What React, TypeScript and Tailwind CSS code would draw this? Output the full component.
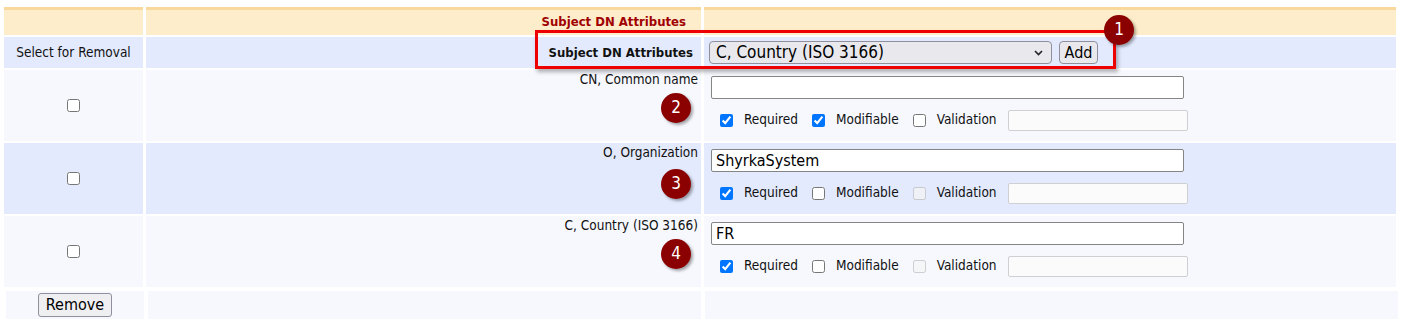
import React from "react";

const font = { fontFamily: '"DejaVu Sans Condensed", "DejaVu Sans", Tahoma, sans-serif' };

function Badge({ n, x, y }: { n: string; x: string; y: string }) {
  return (
    <div
      className={`absolute ${x} ${y} w-[30px] h-[30px] rounded-full bg-[#8b0000] text-white text-[17px] flex items-center justify-center shadow-[2px_2px_3px_rgba(0,0,0,0.35)]`}
    >
      {n}
    </div>
  );
}

function Row({
  label,
  value,
  modifiable,
  validationDisabled,
  bg,
}: {
  label: string;
  value: string;
  modifiable: boolean;
  validationDisabled: boolean;
  bg: string;
}) {
  return (
    <>
      <div className={`${bg} h-[71px] flex items-center justify-center`}>
        <input type="checkbox" className="w-[13px] h-[13px]" />
      </div>
      <div className={`${bg} h-[71px] text-right text-[13.5px] leading-[16px] pt-[1px] pr-[3px] text-[#111]`}>{label}</div>
      <div className={`${bg} h-[71px] pl-[7px] pt-[6px] flex flex-col`}>
        <input
          type="text"
          defaultValue={value}
          className="w-[473px] h-[23px] bg-white border border-[#858585] rounded-[2px] px-[4px] text-[16px] text-black outline-none"
        />
        <div className="mt-[11px] flex items-center h-[21px] text-[13.5px] text-[#111]">
          <input type="checkbox" defaultChecked className="ml-[9px] w-[13px] h-[13px]" />
          <span className="ml-[11px] -mt-[2px]">Required</span>
          <input type="checkbox" defaultChecked={modifiable} className="ml-[14px] w-[13px] h-[13px]" />
          <span className="ml-[11px] -mt-[2px]">Modifiable</span>
          <input
            type="checkbox"
            disabled={validationDisabled}
            className="ml-[14px] w-[13px] h-[13px]"
          />
          <span className="ml-[11px] -mt-[2px]">Validation</span>
          <input
            type="text"
            disabled
            className="ml-[11px] w-[180px] h-[21px] border border-[#cfcfd4] rounded-[2px] bg-[#fbfbfc]"
          />
        </div>
      </div>
    </>
  );
}

export default function App() {
  return (
    <div className="relative w-[1408px] h-[324px] bg-white overflow-hidden" style={font}>
      <div className="pt-[7px] pl-[4px]">
        <div className="grid grid-cols-[139px_555px_692px] gap-x-[3px] gap-y-[2px]">
          {/* header */}
          <div className="h-[28px] bg-[#feedca] border-t-[3px] border-[#f9d89c]" />
          <div className="h-[28px] bg-[#feedca] border-t-[3px] border-[#f9d89c] text-right pr-[15px] text-[13px] font-bold text-[#a00000] leading-[24px]">
            Subject DN Attributes
          </div>
          <div className="h-[28px] bg-[#feedca] border-t-[3px] border-[#f9d89c]" />

          {/* subheader */}
          <div className="h-[31px] bg-[#e3eafd] flex items-center justify-center text-[13.5px] text-[#111]">
            Select for Removal
          </div>
          <div className="h-[31px] bg-[#e3eafd] flex items-center justify-end pr-[8px] text-[13px] font-bold text-[#111]">
            Subject DN Attributes
          </div>
          <div className="h-[31px] bg-[#e3eafd] flex items-center pl-[5px]">
            <div className="relative w-[343px] h-[23px] bg-[#e9e9ed] border border-[#8f8f9d] rounded-[4px] flex items-center pl-[6px] text-[17px] text-black">
              C, Country (ISO 3166)
              <svg className="absolute right-[8px] top-[8px]" width="9" height="6" viewBox="0 0 9 6">
                <path d="M1 1 L4.5 4.5 L8 1" stroke="#222" strokeWidth="1.6" fill="none" />
              </svg>
            </div>
            <button className="ml-[7px] w-[39px] h-[23px] bg-[#e9e9ed] border border-[#8f8f9d] rounded-[4px] text-[16px] text-black flex items-center justify-center">
              Add
            </button>
          </div>

          <Row label="CN, Common name" value="" modifiable={true} validationDisabled={false} bg="bg-[#f6f8fe]" />
          <Row label="O, Organization" value="ShyrkaSystem" modifiable={false} validationDisabled={true} bg="bg-[#e3eafd]" />
          <Row label="C, Country (ISO 3166)" value="FR" modifiable={false} validationDisabled={true} bg="bg-[#f6f8fe]" />
        </div>

        <div className="mt-[4px] ml-[2px] mr-[10px] grid grid-cols-[138px_553px_1fr] gap-x-[4px]">
          <div className="h-[28px] bg-[#f6f8fe] flex items-center justify-center">
            <button className="w-[74px] h-[24px] bg-[#efeff2] border border-[#8f8f9d] rounded-[3px] text-[16px] text-black flex items-center justify-center">
              Remove
            </button>
          </div>
          <div className="h-[28px] bg-[#f6f8fe]" />
          <div className="h-[28px] bg-[#f6f8fe]" />
        </div>
      </div>

      {/* annotation overlays */}
      <div className="absolute left-[535px] top-[30px] w-[581px] h-[39px] border-[3px] border-[#ee0000] shadow-[2px_3px_4px_rgba(0,0,0,0.3)]" />
      <Badge n="1" x="left-[1104px]" y="top-[15px]" />
      <Badge n="2" x="left-[661px]" y="top-[93px]" />
      <Badge n="3" x="left-[661px]" y="top-[169px]" />
      <Badge n="4" x="left-[661px]" y="top-[239px]" />
    </div>
  );
}
